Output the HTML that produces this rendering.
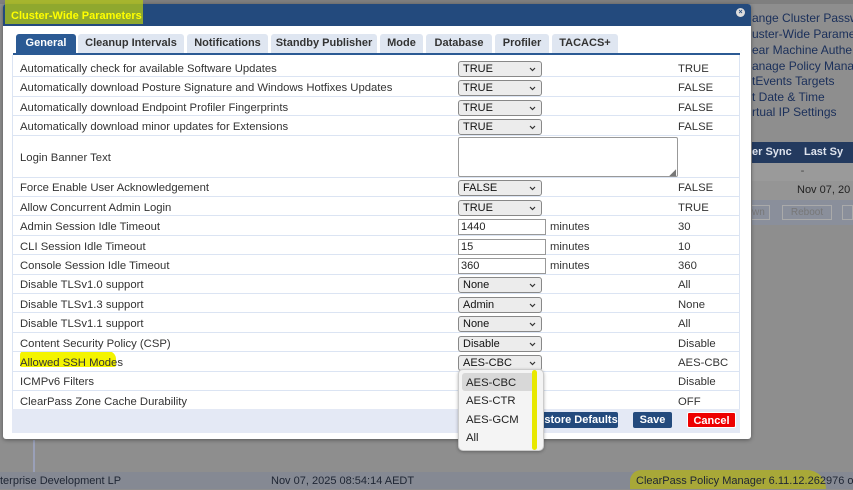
<!DOCTYPE html>
<html><head><meta charset="utf-8"><style>
*{box-sizing:border-box;margin:0;padding:0}
body{width:853px;height:489px;overflow:hidden;background:#8e8e8e;font-family:"Liberation Sans",Verdana,sans-serif;font-size:11.3px;color:#222;position:relative}
.a{position:absolute;white-space:nowrap}
.bgl{color:#1a2f5a;font-size:12px;left:752px}
#dlg{left:3px;top:4px;width:748px;height:435px;background:#fff;border-radius:3px;box-shadow:0 1px 4px rgba(0,0,0,.4)}
#tb{left:0;top:0;width:748px;height:22px;background:#234a7d;border-radius:3px 3px 0 0}
.tab{top:30px;height:19px;background:#dfe6f1;border-radius:3px 3px 0 0;font-weight:bold;font-size:11px;color:#333;text-align:center;line-height:19px}
.row{width:728px;border-bottom:1px solid #dbe4f3}
.lbl{color:#333}
.sel{width:84px;height:16px;border:1px solid #888;border-radius:3px;background:#ececec;font-size:11px;line-height:14px;padding-left:4px;color:#111}
.sel svg{position:absolute;right:5px;top:5px}
.inp{width:88px;height:16px;border:1px solid #999;background:#fff;font-size:11px;line-height:14px;padding-left:2px}
.min{color:#333}
.val{color:#333}
.btn{top:412px;height:16px;color:#fff;font-weight:bold;font-size:11px;line-height:16px;text-align:center;border-radius:2px}
</style></head><body>
<div class="a" style="left:0;top:0;width:853px;height:4px;background:#7f7f7f"></div>
<div class="a" style="left:0;top:440px;width:35px;height:32px;border-right:2px solid #9aa0b8"></div>
<div class="a bgl" style="top:11px">ange Cluster Passw</div>
<div class="a bgl" style="top:27px">uster-Wide Parame</div>
<div class="a bgl" style="top:43px">ear Machine Authe</div>
<div class="a bgl" style="top:59px">anage Policy Manag</div>
<div class="a bgl" style="top:74px">tEvents Targets</div>
<div class="a bgl" style="top:90px">t Date &amp; Time</div>
<div class="a bgl" style="top:105px">rtual IP Settings</div>
<div class="a" style="left:752px;top:142px;width:101px;height:21px;background:#233a5f;color:#dfe4ee;font-weight:bold;font-size:11px;line-height:21px">er Sync &nbsp;&nbsp;&nbsp;Last Sy</div>
<div class="a" style="left:752px;top:163px;width:101px;height:18px;background:#9a9a9a;color:#444;text-align:center;line-height:16px">-</div>
<div class="a" style="left:752px;top:181px;width:101px;height:19px;background:#959595;color:#222;font-size:11px;line-height:19px;padding-left:45px">Nov 07, 20</div>
<div class="a" style="left:752px;top:200px;width:101px;height:25px;background:#8a8f9b"></div>
<div class="a" style="left:752px;top:205px;width:18px;height:15px;border:1px solid #aaa;border-left:0;color:#777;font-size:10px;line-height:13px">wn</div>
<div class="a" style="left:782px;top:205px;width:50px;height:15px;border:1px solid #aaa;color:#777;font-size:10px;line-height:13px;text-align:center">Reboot</div>
<div class="a" style="left:842px;top:205px;width:11px;height:15px;border:1px solid #aaa"></div>
<div class="a" style="left:0;top:472px;width:853px;height:17px;background:#858993"></div>
<div class="a" style="left:630px;top:470px;width:196px;height:19px;background:#a8a838;border-radius:14px 24px 0 0"></div>
<div class="a" style="left:0;top:472px;width:853px;height:17px;color:#1e2533;font-size:11px;line-height:18px">
<span class="a" style="left:0">terprise Development LP</span><span class="a" style="left:271px">Nov 07, 2025 08:54:14 AEDT</span><span class="a" style="left:636px">ClearPass Policy Manager 6.11.12.262976 o</span></div>

<div id="dlg" class="a">
<div id="tb" class="a"></div>
<div class="a" style="left:2px;top:-4px;width:138px;height:24px;background:rgba(180,200,20,.75)"></div>
<div class="a" style="left:8px;top:6px;color:#ff0;font-weight:bold;font-size:11px">Cluster-Wide Parameters</div>
<div class="a" style="left:733px;top:4px;width:9px;height:9px;border-radius:50%;background:#ddd;color:#234a7d;font-size:7px;line-height:9px;text-align:center;font-weight:bold">×</div>
<div class="a tab" style="left:13px;width:60px;background:#2b5a94;color:#fff">General</div>
<div class="a tab" style="left:75px;width:106px">Cleanup Intervals</div>
<div class="a tab" style="left:184px;width:81px">Notifications</div>
<div class="a tab" style="left:268px;width:106px">Standby Publisher</div>
<div class="a tab" style="left:377px;width:43px">Mode</div>
<div class="a tab" style="left:423px;width:66px">Database</div>
<div class="a tab" style="left:492px;width:54px">Profiler</div>
<div class="a tab" style="left:549px;width:66px">TACACS+</div>
<div class="a" style="left:10px;top:49px;width:727px;height:2px;background:#2b5a94"></div>
<div class="a" style="left:9px;top:51px;width:728px;height:354px;border-left:1px solid #dbe4f3;border-right:1px solid #dbe4f3"></div>
</div>

<div class="a" style="left:20px;top:351px;width:96px;height:16px;background:#f4f400;border-radius:4px 8px 2px 2px"></div>
<div id="rows"></div>
<div class="a" style="left:12px;top:409px;width:728px;height:24px;background:#e4e9f5"></div>
<div class="a btn" style="left:530px;width:88px;background:#234a7d">Restore Defaults</div>
<div class="a btn" style="left:633px;width:39px;background:#234a7d">Save</div>
<div class="a btn" style="left:687px;width:49px;background:#e00;border:1px solid #fff">Cancel</div>
<div class="a" style="left:458px;top:369px;width:86px;height:82px;background:#f4f4f4;border:1px solid #ccc;border-radius:5px;box-shadow:0 1px 3px rgba(0,0,0,.3)"></div>
<div class="a" style="left:462px;top:373px;width:72px;height:18px;background:#d8d8d8;border-radius:3px"></div>
<div class="a" style="left:466px;top:377px">AES-CBC</div>
<div class="a" style="left:466px;top:395px">AES-CTR</div>
<div class="a" style="left:466px;top:414px">AES-GCM</div>
<div class="a" style="left:466px;top:432px">All</div>
<div class="a" style="left:532px;top:370px;width:5px;height:80px;background:#e8e800;border-radius:3px"></div>

<script>
var R=[["Automatically check for available Software Updates","s","TRUE","TRUE"],
["Automatically download Posture Signature and Windows Hotfixes Updates","s","TRUE","FALSE"],
["Automatically download Endpoint Profiler Fingerprints","s","TRUE","FALSE"],
["Automatically download minor updates for Extensions","s","TRUE","FALSE"],
["Login Banner Text","t","",""],
["Force Enable User Acknowledgement","s","FALSE","FALSE"],
["Allow Concurrent Admin Login","s","TRUE","TRUE"],
["Admin Session Idle Timeout","i","1440","30"],
["CLI Session Idle Timeout","i","15","10"],
["Console Session Idle Timeout","i","360","360"],
["Disable TLSv1.0 support","s","None","All"],
["Disable TLSv1.3 support","s","Admin","None"],
["Disable TLSv1.1 support","s","None","All"],
["Content Security Policy (CSP)","s","Disable","Disable"],
["Allowed SSH Modes","s","AES-CBC","AES-CBC"],
["ICMPv6 Filters","n","","Disable"],
["ClearPass Zone Cache Durability","n","","OFF"]];
var y=58,h="";
var arr='<svg width="7" height="5" viewBox="0 0 7 5"><path d="M1 1L3.5 3.5L6 1" stroke="#333" stroke-width="1.2" fill="none"/></svg>';
R.forEach(function(r){var H=r[1]=="t"?42:19.4;var c=y+H/2;
h+='<div class="a row" style="left:12px;top:'+y+'px;height:'+H+'px"></div>';
h+='<div class="a lbl" style="left:20px;top:'+(c-5)+'px">'+r[0]+'</div>';
if(r[1]=="s")h+='<div class="a sel" style="left:458px;top:'+(c-7)+'px">'+r[2]+arr+'</div>';
if(r[1]=="i")h+='<div class="a inp" style="left:458px;top:'+(c-7)+'px">'+r[2]+'</div><div class="a min" style="left:550px;top:'+(c-5)+'px">minutes</div>';
if(r[1]=="t")h+='<div class="a" style="left:458px;top:'+(y+1)+'px;width:220px;height:40px;border:1px solid #999;border-radius:2px;background:#fff"><span class="a" style="right:1px;bottom:-2px;font-size:9px;color:#777">◢</span></div>';
h+='<div class="a val" style="left:678px;top:'+(c-5)+'px">'+r[3]+'</div>';
y+=H;});
document.getElementById("rows").innerHTML=h;
</script>
</body></html>
